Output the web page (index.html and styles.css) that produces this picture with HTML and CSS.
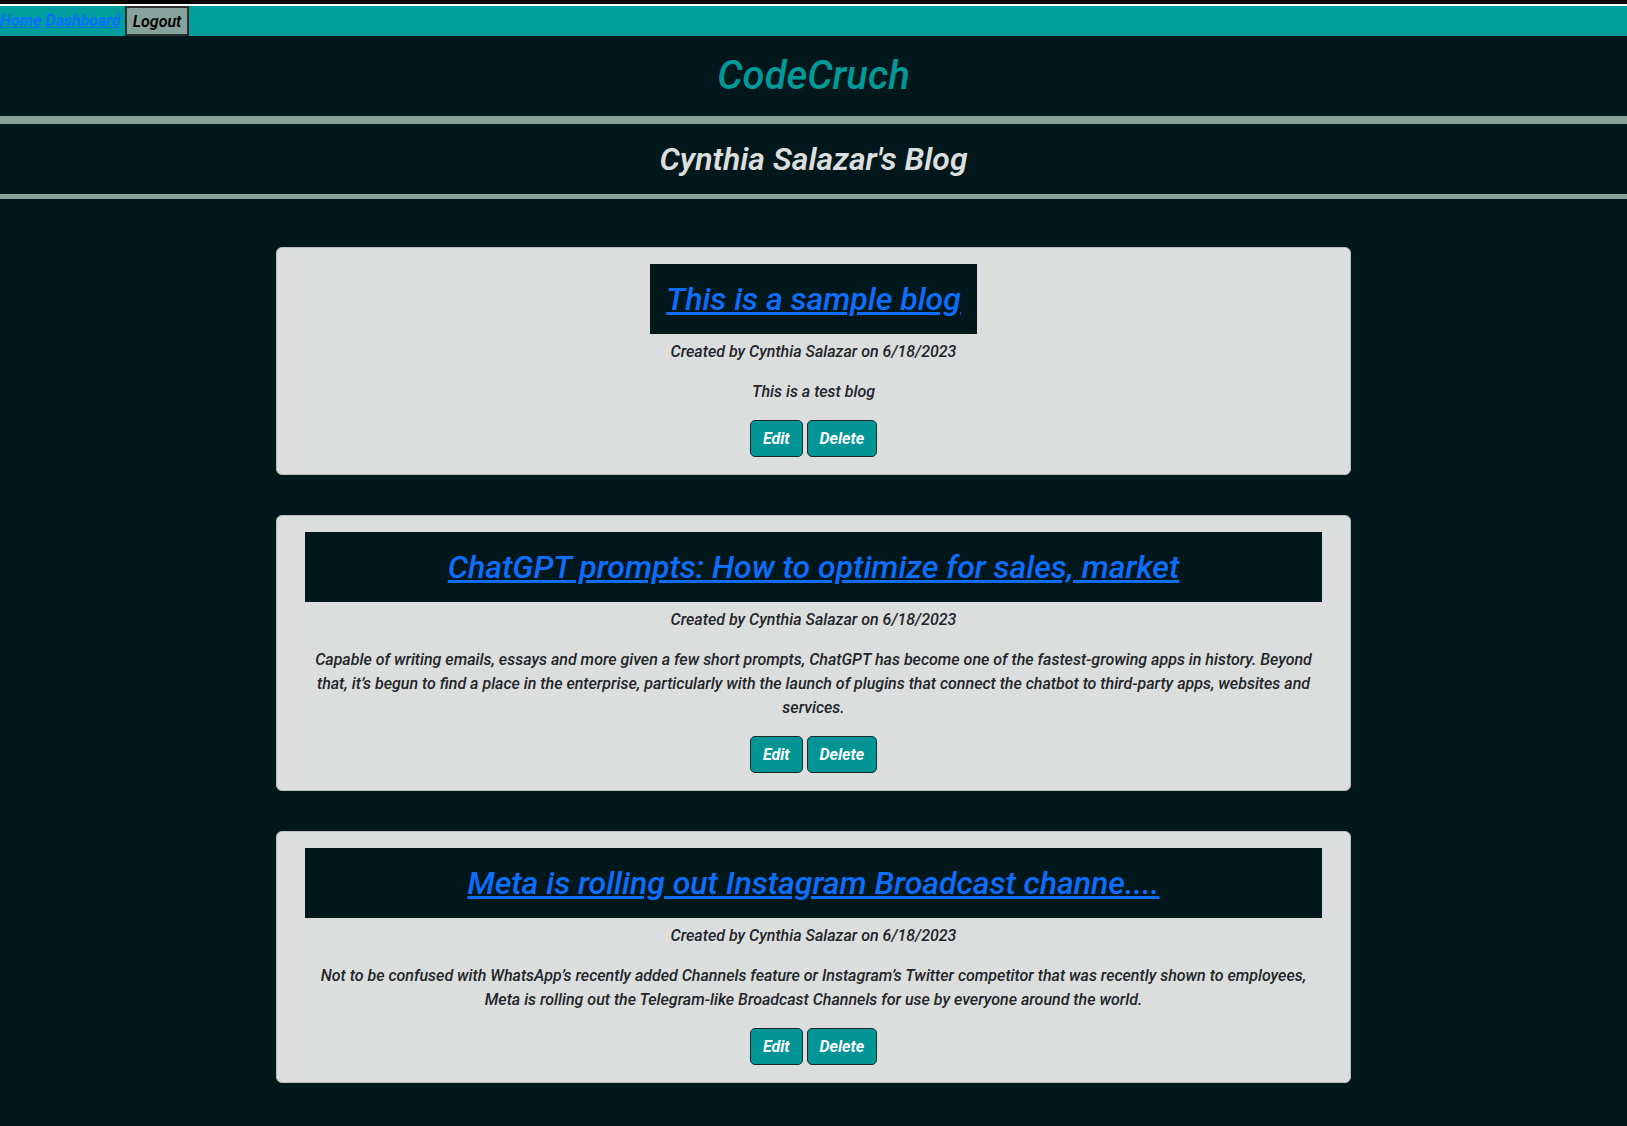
FILE: index.html
```html
<!DOCTYPE html>
<html lang="en">
<head>
<meta charset="utf-8">
<title>CodeCruch</title>
<link rel="stylesheet" href="styles.css">
</head>
<body>
<div class="topline"></div>
<nav class="nav">
  <a href="#" class="nav-link">Home</a>
  <a href="#" class="nav-link">Dashboard</a>
  <button class="logout">Logout</button>
</nav>
<header class="site-header">
  <h1 class="brand">CodeCruch</h1>
</header>
<section class="blog-head">
  <h2 class="blog-name">Cynthia Salazar's Blog</h2>
</section>
<main class="posts">
  <article class="card">
    <h2 class="post-title post-title-fit"><a href="#">This is a sample blog</a></h2>
    <p class="meta">Created by Cynthia Salazar on 6/18/2023</p>
    <p class="body">This is a test blog</p>
    <div class="actions"><button class="btn">Edit</button> <button class="btn">Delete</button></div>
  </article>
  <article class="card">
    <h2 class="post-title"><a href="#">ChatGPT prompts: How to optimize for sales, market</a></h2>
    <p class="meta">Created by Cynthia Salazar on 6/18/2023</p>
    <p class="body">Capable of writing emails, essays and more given a few short prompts, ChatGPT has become one of the fastest-growing apps in history. Beyond that, it’s begun to find a place in the enterprise, particularly with the launch of plugins that connect the chatbot to third-party apps, websites and services.</p>
    <div class="actions"><button class="btn">Edit</button> <button class="btn">Delete</button></div>
  </article>
  <article class="card">
    <h2 class="post-title"><a href="#">Meta is rolling out Instagram Broadcast channe....</a></h2>
    <p class="meta">Created by Cynthia Salazar on 6/18/2023</p>
    <p class="body">Not to be confused with WhatsApp’s recently added Channels feature or Instagram’s Twitter competitor that was recently shown to employees, Meta is rolling out the Telegram-like Broadcast Channels for use by everyone around the world.</p>
    <div class="actions"><button class="btn">Edit</button> <button class="btn">Delete</button></div>
  </article>
</main>
</body>
</html>
```

FILE: styles.css
```css
* { box-sizing: border-box; }

html, body {
  margin: 0;
  padding: 0;
}

body {
  background: #00181b;
  font-family: Roboto, "Liberation Sans", sans-serif;
  font-style: italic;
  font-weight: 500;
  font-size: 16px;
  line-height: 24px;
  color: #212529;
  min-height: 1126px;
}

.topline {
  height: 6px;
  background: #000;
  border-bottom: 2px solid #fff;
}

.nav {
  display: flex;
  align-items: stretch;
  gap: 4px;
  height: 30px;
  background: #009d9d;
}

.nav-link {
  color: #0d6efd;
  text-decoration: underline;
  font-weight: 700;
  line-height: 30px;
}

.logout {
  font-family: inherit;
  font-style: italic;
  font-weight: 600;
  font-size: 16px;
  color: #000;
  background: #85a39b;
  border: 2px solid #2a2f2f;
  padding: 0 6px;
  height: 30px;
  margin: 0;
}

.site-header {
  text-align: center;
  border-bottom: 8px solid #85a39b;
}

.brand {
  margin: 0;
  padding: 16px 0;
  font-size: 40px;
  line-height: 48px;
  font-weight: 500;
  color: #009999;
}

.blog-head {
  text-align: center;
  border-bottom: 5px solid #85a39b;
}

.blog-name {
  margin: 0;
  padding: 16px 0;
  font-size: 32px;
  line-height: 38px;
  font-weight: 600;
  color: #dcdedd;
}

.posts {
  width: 1075px;
  margin: 48px auto 0;
  padding-bottom: 40px;
}

.card {
  background: #dcdedd;
  border: 1px solid #b9bebc;
  border-radius: 6px;
  padding: 16px 28px 17px;
  text-align: center;
  margin-bottom: 40px;
}

.post-title {
  margin: 0;
  padding: 16px;
  background: #00181b;
  font-size: 32px;
  line-height: 38px;
  font-weight: 500;
}

.post-title-fit {
  display: inline-block;
}

.post-title a {
  color: #0d6efd;
  text-decoration: underline;
}

.meta {
  margin: 6px 0 16px;
}

.body {
  margin: 0 0 16px;
}

.btn {
  font-family: inherit;
  font-style: italic;
  font-weight: 700;
  font-size: 16px;
  line-height: 25px;
  color: #fff;
  background: #009595;
  border: 1px solid #1c2a2b;
  border-radius: 5px;
  padding: 5px 12px;
  margin: 0;
}
```
